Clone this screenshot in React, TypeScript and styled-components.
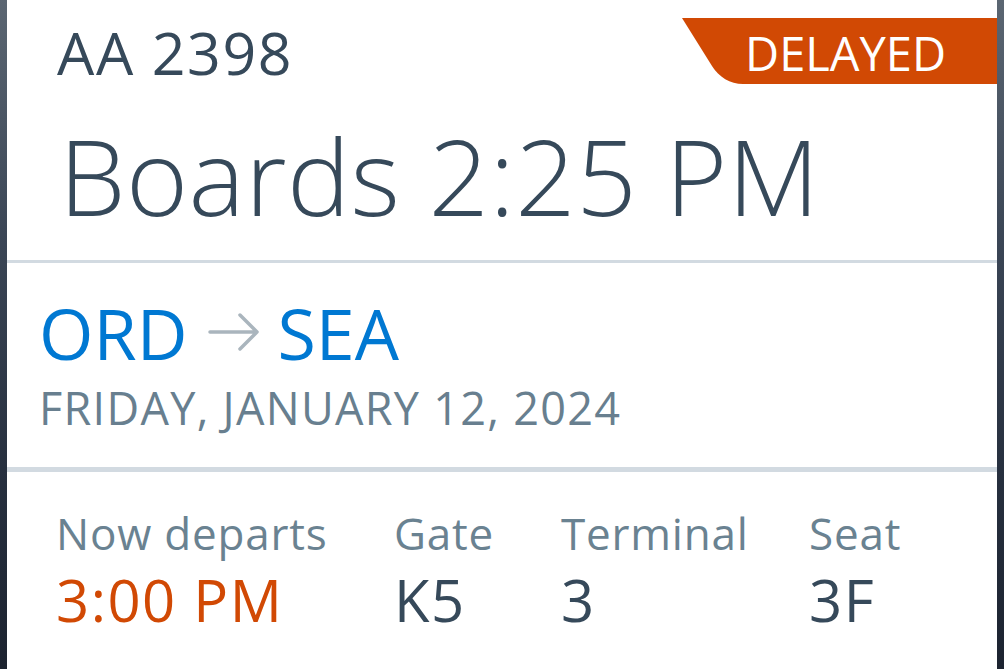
import React from 'react';
import styled, { createGlobalStyle } from 'styled-components';

const GlobalStyle = createGlobalStyle`
	html, body {
		margin: 0;
		padding: 0;
		height: 100%;
	}
	body {
		background: linear-gradient(180deg, #5b6672 0%, #3b4656 35%, #27303f 70%, #1c2330 100%);
		font-family: 'Open Sans', 'Noto Sans', sans-serif;
		overflow: hidden;
	}
`;

const Card = styled.main`
	position: relative;
	margin: 0 7px;
	min-height: 669px;
	background: #fff;
	color: #36495a;
`;

const Section = styled.section<{ $padTop: number; $padLeft: number; $padBottom?: number; $rule?: number }>`
	display: flex;
	flex-direction: column;
	padding: ${(p) => p.$padTop}px 0 ${(p) => p.$padBottom ?? 0}px ${(p) => p.$padLeft}px;
	border-bottom: ${(p) => (p.$rule ? `${p.$rule}px solid #d2dae1` : 'none')};
`;

const FlightNumber = styled.div`
	font-size: 59px;
	line-height: 1;
	letter-spacing: 1.6px;
`;

const Boards = styled.h1`
	margin: 40px 0 0;
	font-size: 106px;
	font-weight: 300;
	line-height: 1;
	letter-spacing: 0.5px;
	padding-left: 2px;
`;

const StatusBadge = styled.div`
	position: absolute;
	top: 18px;
	right: 0;
	width: 315px;
	height: 66px;
	background: #d14904;
	clip-path: path('M0 0 H315 V66 H61 C48 66 37 59 30 48 Z');
	display: flex;
	align-items: center;
	justify-content: flex-end;
	padding-right: 51px;
	box-sizing: border-box;
	color: #fff;
	font-size: 47px;
	line-height: 1;
	padding-top: 4px;
`;

const Route = styled.div`
	display: flex;
	align-items: center;
	gap: 21px;
	font-size: 70px;
	line-height: 1;
	color: #0078d2;
`;

const RouteArrow = styled.svg`
	width: 52px;
	height: 40px;
	margin: -2px -4px 0 0;
`;

const DateLine = styled.div`
	margin-top: 17px;
	font-size: 45px;
	line-height: 1;
	letter-spacing: 1.3px;
	color: #687f8f;
`;

const Details = styled.div`
	display: grid;
	grid-template-columns: 338px 167px 248px auto;
`;

const Detail = styled.div`
	display: flex;
	flex-direction: column;
	gap: 16px;
`;

const DetailLabel = styled.div`
	font-size: 44px;
	line-height: 1;
	letter-spacing: 0.8px;
	color: #6a8291;
	white-space: nowrap;
`;

const DetailValue = styled.div<{ $alert?: boolean }>`
	font-size: 58px;
	line-height: 1;
	letter-spacing: 1.5px;
	color: ${(p) => (p.$alert ? '#d14904' : '#36495a')};
`;

const details = [
	{ label: 'Now departs', value: '3:00 PM', alert: true },
	{ label: 'Gate', value: 'K5' },
	{ label: 'Terminal', value: '3' },
	{ label: 'Seat', value: '3F' },
];

export default function App() {
	return (
		<>
			<GlobalStyle />
			<Card>
				<StatusBadge>DELAYED</StatusBadge>
				<Section $padTop={23} $padLeft={50} $padBottom={32} $rule={3}>
					<FlightNumber>AA 2398</FlightNumber>
					<Boards>Boards 2:25 PM</Boards>
				</Section>
				<Section $padTop={35} $padLeft={32} $padBottom={37} $rule={5}>
					<Route>
						<span>ORD</span>
						<RouteArrow viewBox="0 0 52 40" fill="none" stroke="#aab5bd" strokeWidth="3.5" strokeLinecap="round" strokeLinejoin="round">
							<path d="M2 20 H49 M32 3 L49 20 L32 37" />
						</RouteArrow>
						<span>SEA</span>
					</Route>
					<DateLine>FRIDAY, JANUARY 12, 2024</DateLine>
				</Section>
				<Section $padTop={39} $padLeft={49}>
					<Details>
						{details.map((d) => (
							<Detail key={d.label}>
								<DetailLabel>{d.label}</DetailLabel>
								<DetailValue $alert={d.alert}>{d.value}</DetailValue>
							</Detail>
						))}
					</Details>
				</Section>
			</Card>
		</>
	);
}
